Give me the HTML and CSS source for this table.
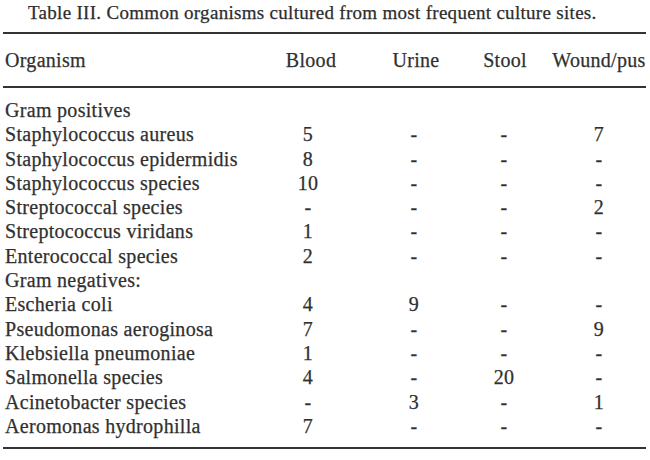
FILE: index.html
```html
<!DOCTYPE html>
<html>
<head>
<meta charset="utf-8">
<link rel="stylesheet" href="styles.css">
</head>
<body>
<div class="page">
  <div class="title">Table III. Common organisms cultured from most frequent culture sites.</div>
  <div class="rule"></div>
  <div class="row head">
    <div class="c name">Organism</div>
    <div class="c blood">Blood</div>
    <div class="c urine">Urine</div>
    <div class="c stool">Stool</div>
    <div class="c wound">Wound/pus</div>
  </div>
  <div class="rule"></div>
  <div class="body">
    <div class="row"><div class="c name">Gram positives</div></div>
    <div class="row"><div class="c name">Staphylococcus aureus</div><div class="c blood">5</div><div class="c urine">-</div><div class="c stool">-</div><div class="c wound">7</div></div>
    <div class="row"><div class="c name">Staphylococcus epidermidis</div><div class="c blood">8</div><div class="c urine">-</div><div class="c stool">-</div><div class="c wound">-</div></div>
    <div class="row"><div class="c name">Staphylococcus species</div><div class="c blood">10</div><div class="c urine">-</div><div class="c stool">-</div><div class="c wound">-</div></div>
    <div class="row"><div class="c name">Streptococcal species</div><div class="c blood">-</div><div class="c urine">-</div><div class="c stool">-</div><div class="c wound">2</div></div>
    <div class="row"><div class="c name">Streptococcus viridans</div><div class="c blood">1</div><div class="c urine">-</div><div class="c stool">-</div><div class="c wound">-</div></div>
    <div class="row"><div class="c name">Enterococcal species</div><div class="c blood">2</div><div class="c urine">-</div><div class="c stool">-</div><div class="c wound">-</div></div>
    <div class="row"><div class="c name">Gram negatives:</div></div>
    <div class="row"><div class="c name">Escheria coli</div><div class="c blood">4</div><div class="c urine">9</div><div class="c stool">-</div><div class="c wound">-</div></div>
    <div class="row"><div class="c name">Pseudomonas aeroginosa</div><div class="c blood">7</div><div class="c urine">-</div><div class="c stool">-</div><div class="c wound">9</div></div>
    <div class="row"><div class="c name">Klebsiella pneumoniae</div><div class="c blood">1</div><div class="c urine">-</div><div class="c stool">-</div><div class="c wound">-</div></div>
    <div class="row"><div class="c name">Salmonella species</div><div class="c blood">4</div><div class="c urine">-</div><div class="c stool">20</div><div class="c wound">-</div></div>
    <div class="row"><div class="c name">Acinetobacter species</div><div class="c blood">-</div><div class="c urine">3</div><div class="c stool">-</div><div class="c wound">1</div></div>
    <div class="row"><div class="c name">Aeromonas hydrophilla</div><div class="c blood">7</div><div class="c urine">-</div><div class="c stool">-</div><div class="c wound">-</div></div>
  </div>
  <div class="rule"></div>
</div>
</body>
</html>
```

FILE: styles.css
```css
html, body {
  margin: 0;
  padding: 0;
  background: #ffffff;
}
.page {
  width: 643px;
  margin-left: 3px;
  color: #303030;
  font-family: "Liberation Serif", "Times New Roman", serif;
  font-size: 20px;
  letter-spacing: 0.3px;
  -webkit-text-stroke: 0.25px #303030;
}
.title {
  font-size: 19px;
  line-height: 26px;
  padding-left: 25px;
  letter-spacing: 0.3px;
  color: #2c2c2c;
}
.rule {
  height: 2px;
  background: #333333;
  margin-top: 6px;
}
.body {
  padding-top: 10px;
  padding-bottom: 9px;
}
.row {
  display: grid;
  grid-template-columns: 257px 96px 116px 64px 16px 94px;
  line-height: 24.3px;
}
.head.row {
  line-height: 52px;
}
.head + .rule {
  margin-top: 0;
}
.body + .rule {
  margin-top: 0;
}
.c {
  text-align: center;
  white-space: nowrap;
}
.name {
  grid-column: 1;
  text-align: left;
  padding-left: 2px;
}
.blood { grid-column: 2; }
.urine { grid-column: 3; }
.stool { grid-column: 4; }
.wound { grid-column: 6; }
.head .blood { padding-left: 6px; }
.head .urine { padding-left: 4px; }
.head .stool { padding-left: 2px; }
```
